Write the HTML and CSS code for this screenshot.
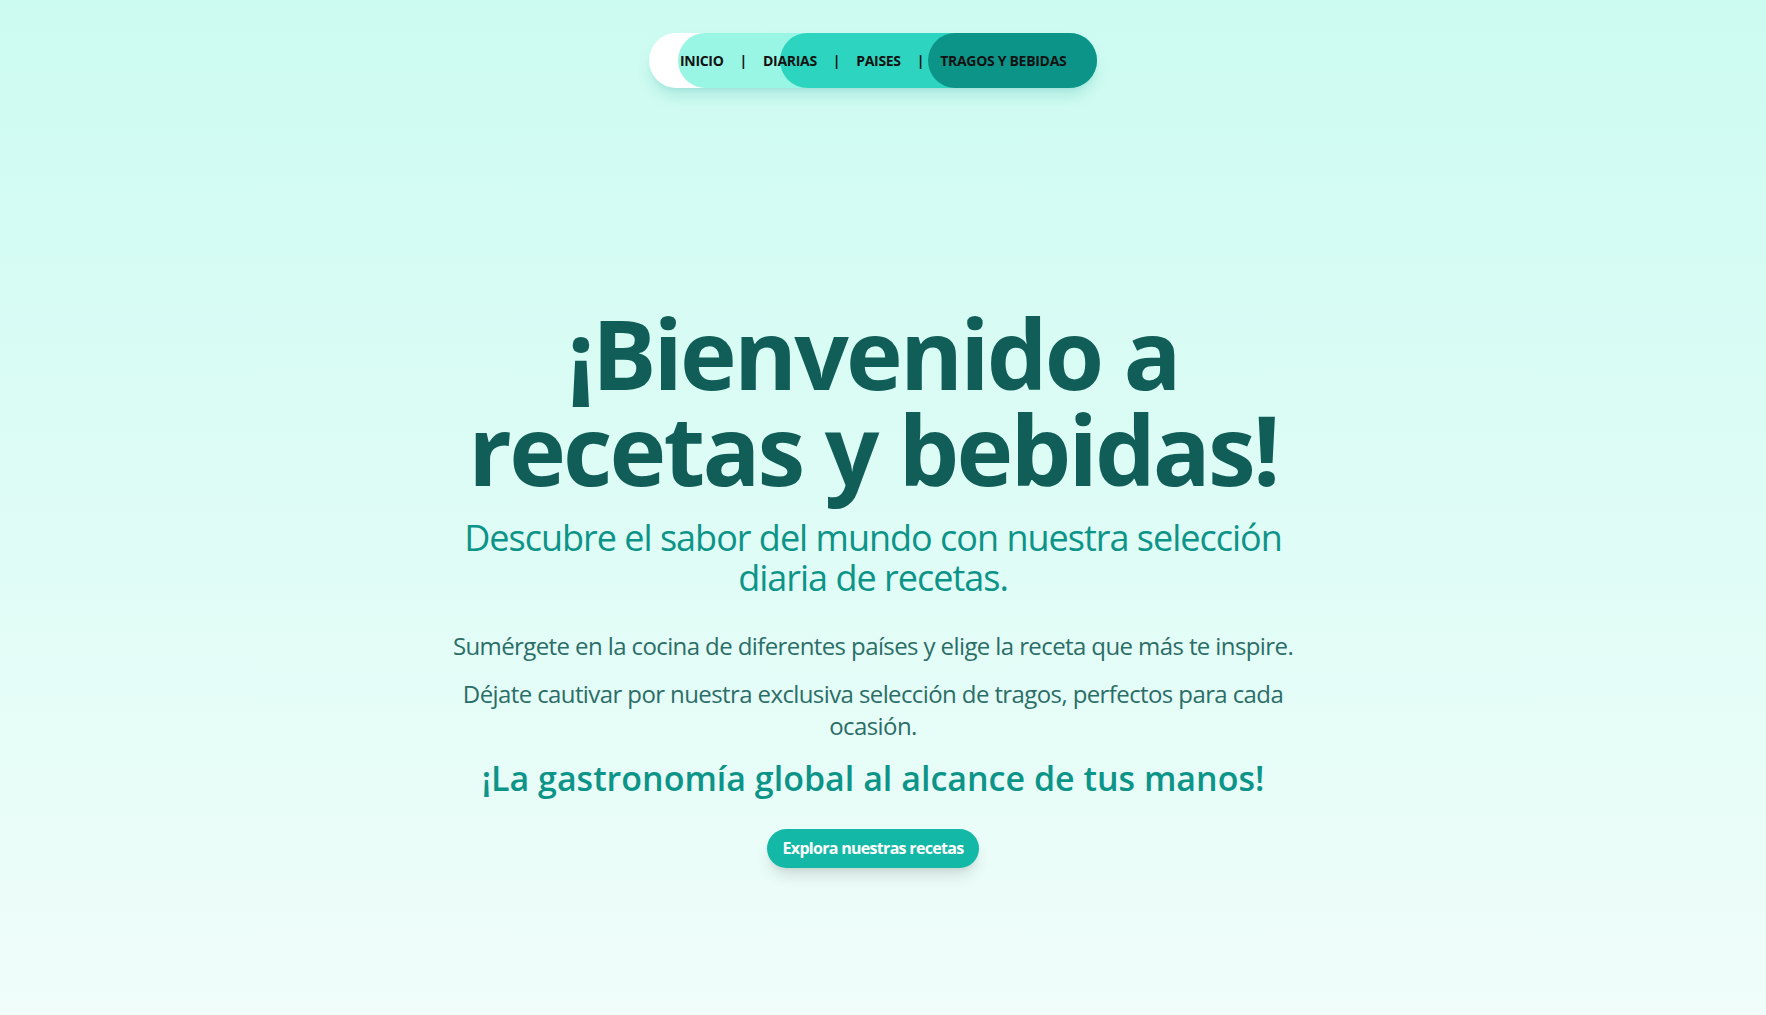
FILE: index.html
```html
<!DOCTYPE html>
<html lang="es">
<head>
<meta charset="utf-8">
<title>Recetas y bebidas</title>
<link rel="stylesheet" href="styles.css">
</head>
<body>
<div class="page">
  <nav class="nav">
    <span class="layer layer-1"></span>
    <span class="layer layer-2"></span>
    <span class="layer layer-3"></span>
    <ul class="links">
      <li><a href="#">INICIO</a></li>
      <li class="sep">|</li>
      <li><a href="#">DIARIAS</a></li>
      <li class="sep">|</li>
      <li><a href="#">PAISES</a></li>
      <li class="sep">|</li>
      <li><a href="#">TRAGOS Y BEBIDAS</a></li>
    </ul>
  </nav>

  <main class="hero">
    <h1 class="title">¡Bienvenido a<br>recetas y bebidas!</h1>
    <h2 class="subtitle">Descubre el sabor del mundo con nuestra selección diaria de recetas.</h2>
    <p class="text">Sumérgete en la cocina de diferentes países y elige la receta que más te inspire.</p>
    <p class="text second">Déjate cautivar por nuestra exclusiva selección de tragos, perfectos para cada ocasión.</p>
    <p class="tagline">¡La gastronomía global al alcance de tus manos!</p>
    <a class="cta" href="#">Explora nuestras recetas</a>
  </main>
</div>
</body>
</html>
```

FILE: styles.css
```css
* { box-sizing: border-box; }

html, body {
  margin: 0;
  padding: 0;
}

body {
  font-family: "Open Sans", "Noto Sans", sans-serif;
  background: linear-gradient(to bottom, #ccfbf1 0%, #f0fdfa 100%);
  min-height: 100vh;
}

.page {
  min-height: 100vh;
  display: flex;
  flex-direction: column;
  align-items: center;
  padding-top: 33px;
  padding-right: 20px;
}

/* NAV */
.nav {
  display: grid;
  width: 448px;
  height: 55px;
  background: #ffffff;
  border-radius: 9999px;
  box-shadow: 0 10px 15px -3px rgba(13, 148, 136, 0.18), 0 4px 6px -4px rgba(13, 148, 136, 0.15);
}

.layer,
.links {
  grid-area: 1 / 1;
}

.layer {
  border-radius: 9999px;
}

.layer-1 { margin-left: 29px; background: #99f6e4; }
.layer-2 { margin-left: 131px; background: #2dd4bf; }
.layer-3 { margin-left: 279px; background: #0d9488; }

.links {
  position: relative;
  list-style: none;
  margin: 0;
  padding: 0 0 0 31px;
  display: flex;
  align-items: center;
  font-size: 14px;
  font-weight: 700;
  color: #111111;
  letter-spacing: -0.3px;
}

.links a {
  color: #111111;
  text-decoration: none;
}

.sep {
  margin: 0 16px;
}

/* HERO */
.hero {
  width: 896px;
  text-align: center;
  display: flex;
  flex-direction: column;
  align-items: center;
  margin-top: 217px;
}

.title {
  margin: 0;
  font-size: 96px;
  line-height: 96px;
  font-weight: 700;
  color: #115e59;
  letter-spacing: -2.8px;
}

.subtitle {
  margin: 21px 0 0;
  font-size: 36px;
  line-height: 40px;
  font-weight: 400;
  color: #0d9488;
  letter-spacing: -1px;
}

.text {
  margin: 32px 0 0;
  font-size: 24px;
  line-height: 32px;
  color: #2b6e67;
  letter-spacing: -0.6px;
}

.text.second {
  margin-top: 16px;
}

.tagline {
  margin: 16px 0 0;
  font-size: 34px;
  line-height: 40px;
  font-weight: 600;
  color: #0d9488;
  letter-spacing: 0;
}

.cta {
  margin-top: 31px;
  display: inline-block;
  padding: 8px 16px;
  border-radius: 9999px;
  background: #14b8a6;
  color: #ffffff;
  font-size: 16px;
  line-height: 23px;
  font-weight: 700;
  text-decoration: none;
  letter-spacing: -0.7px;
  box-shadow: 0 10px 15px -3px rgba(0, 0, 0, 0.12), 0 4px 6px -4px rgba(0, 0, 0, 0.1);
}
```
